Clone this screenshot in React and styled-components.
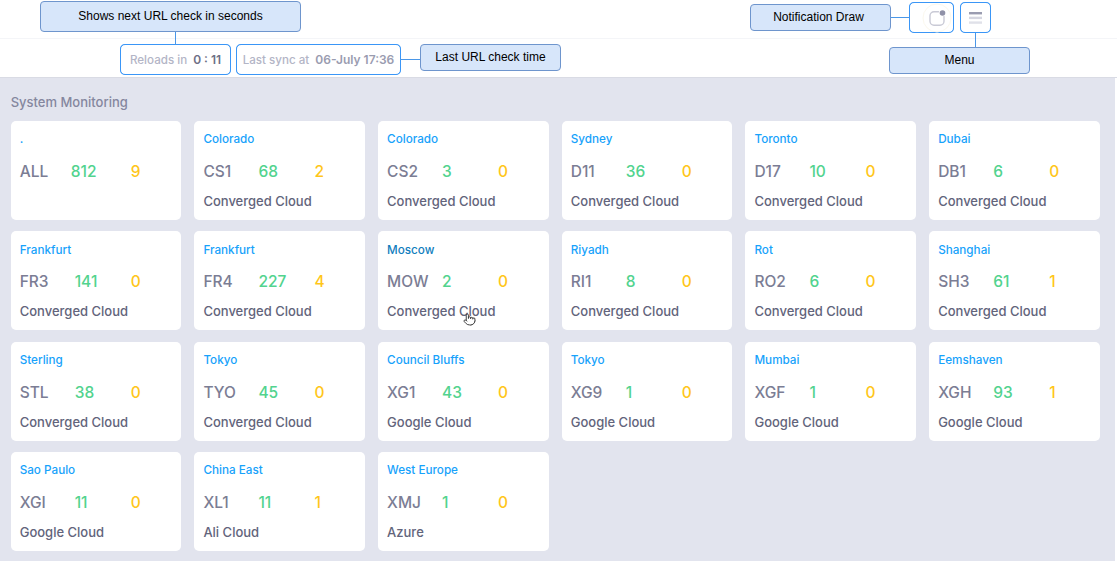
import React from "react"
import styled, { createGlobalStyle } from "styled-components"
import { Pointer } from "lucide-react"

const GlobalStyle = createGlobalStyle`
  html, body {
    margin: 0;
    padding: 0;
    background: #fff;
    font-family: Inter, "Liberation Sans", sans-serif;
  }
`

const Page = styled.div`
  position: relative;
  width: 1117px;
  height: 561px;
  overflow: hidden;
`

const Header = styled.header`
  height: 77px;
  border-bottom: 1px solid #d9dbe4;
`

const TopBar = styled.div`
  box-sizing: border-box;
  height: 39px;
  border-bottom: 1px solid #f4f5f8;
  display: flex;
  justify-content: flex-end;
  align-items: flex-start;
  gap: 6px;
  padding: 2px 126px 0 0;
`

const SubBar = styled.div`
  display: flex;
  gap: 5px;
  padding: 5px 0 0 120px;
`

const Outlined = styled.div`
  box-sizing: border-box;
  height: 31px;
  border: 1px solid #3a96f7;
  box-shadow: 0 0 0.6px #3a96f7;
  border-radius: 5px;
  display: flex;
  align-items: center;
  justify-content: center;
  background: #fff;
`

const IconBox = styled(Outlined)`
  width: ${p => p.$w}px;
  padding-left: ${p => p.$shift || 0}px;
`

const Badge = styled(Outlined)`
  width: ${p => p.$w}px;
  gap: 6px;
  font-size: 11.6px;
  font-weight: 500;
  color: #b3b5c6;
`

const BadgeValue = styled.span`
  font-size: 12px;
  font-weight: 600;
  color: ${p => p.$dark ? "#6e7086" : "#9a9cb0"};
`

const Callout = styled.div`
  position: absolute;
  box-sizing: border-box;
  left: ${p => p.$x}px;
  top: ${p => p.$y}px;
  width: ${p => p.$w}px;
  height: ${p => p.$h}px;
  padding: 0 ${p => p.$nudge || 0}px 2px 0;
  background: #d7e6fa;
  border: 1px solid #6e95cd;
  border-radius: 4px;
  display: flex;
  align-items: center;
  justify-content: center;
  font-family: "Liberation Sans", Arial, sans-serif;
  font-size: 12px;
  color: #000;
`

const Line = styled.div`
  position: absolute;
  left: ${p => p.$x}px;
  top: ${p => p.$y}px;
  width: ${p => p.$w}px;
  height: ${p => p.$h}px;
  background: #4a97e8;
`

const Main = styled.main`
  background: #e2e4ee;
  width: 1115px;
  height: 483px;
  box-sizing: border-box;
  padding: 16.5px 0 0 10.7px;
`

const Title = styled.h1`
  margin: 0 0 11.5px;
  font-size: 13px;
  line-height: 15px;
  font-weight: 500;
  color: #85879e;
`

const Grid = styled.div`
  display: grid;
  grid-template-columns: repeat(6, 170.5px);
  grid-auto-rows: 99px;
  column-gap: 13.2px;
  row-gap: 11.3px;
`

const Card = styled.div`
  position: relative;
  box-sizing: border-box;
  background: #fff;
  border-radius: 5px;
  padding: 11.3px 9px 0;
`

const Region = styled.div`
  height: 15px;
  font-size: 11.7px;
  line-height: 15px;
  font-weight: 500;
  color: ${p => p.$active ? "#0f7dbd" : "#17a2fb"};
`

const Stats = styled.div`
  display: flex;
  margin-top: 14.7px;
  font-size: 15.5px;
  line-height: 20px;
  font-weight: 500;
`

const Code = styled.span`
  width: ${p => p.$wide ? 51 : 55}px;
  color: #7b7d94;
`

const Okay = styled.span`
  width: ${p => p.$wide ? 60 : 56}px;
  color: #52d38e;
`

const Warn = styled.span`
  color: #ffc61a;
`

const Provider = styled.div`
  margin-top: 11px;
  font-size: 13px;
  line-height: 17px;
  font-weight: 500;
  color: #62647b;
`

const Cursor = styled.span`
  position: absolute;
  left: 85px;
  top: 82px;
  display: flex;
  color: #222;
`

const sites = [
  [".", "ALL", 812, 9, ""],
  ["Colorado", "CS1", 68, 2, "Converged Cloud"],
  ["Colorado", "CS2", 3, 0, "Converged Cloud"],
  ["Sydney", "D11", 36, 0, "Converged Cloud"],
  ["Toronto", "D17", 10, 0, "Converged Cloud"],
  ["Dubai", "DB1", 6, 0, "Converged Cloud"],
  ["Frankfurt", "FR3", 141, 0, "Converged Cloud"],
  ["Frankfurt", "FR4", 227, 4, "Converged Cloud"],
  ["Moscow", "MOW", 2, 0, "Converged Cloud"],
  ["Riyadh", "RI1", 8, 0, "Converged Cloud"],
  ["Rot", "RO2", 6, 0, "Converged Cloud"],
  ["Shanghai", "SH3", 61, 1, "Converged Cloud"],
  ["Sterling", "STL", 38, 0, "Converged Cloud"],
  ["Tokyo", "TYO", 45, 0, "Converged Cloud"],
  ["Council Bluffs", "XG1", 43, 0, "Google Cloud"],
  ["Tokyo", "XG9", 1, 0, "Google Cloud"],
  ["Mumbai", "XGF", 1, 0, "Google Cloud"],
  ["Eemshaven", "XGH", 93, 1, "Google Cloud"],
  ["Sao Paulo", "XGI", 11, 0, "Google Cloud"],
  ["China East", "XL1", 11, 1, "Ali Cloud"],
  ["West Europe", "XMJ", 1, 0, "Azure"],
]

const NotifyIcon = () => (
  <svg width="30" height="30" viewBox="0 0 30 30">
    <circle cx="15" cy="15" r="14" fill="none" stroke="#fbf8ee" strokeWidth="1" />
    <path d="M16.5 8.7h-4.5a4 4 0 0 0-4 4v5.5a4 4 0 0 0 4 4h6a4 4 0 0 0 4-4v-4.7" fill="none" stroke="#c9cad6" strokeWidth="1.4" strokeLinecap="round" />
    <circle cx="20.5" cy="10" r="2.8" fill="#8f91a8" />
  </svg>
)

const MenuIcon = () => (
  <svg width="13" height="12" viewBox="0 0 13 12">
    <rect y="0" width="13" height="2.4" fill="#9a9cb0" />
    <rect y="4.7" width="13" height="2.4" fill="#d5d6e0" />
    <rect y="9.4" width="13" height="2.4" fill="#e0e1e9" />
  </svg>
)

export default function App() {
  return (
    <Page>
      <GlobalStyle />
      <Header>
        <TopBar>
          <IconBox $w={45} $shift={10}><NotifyIcon /></IconBox>
          <IconBox $w={31}><MenuIcon /></IconBox>
        </TopBar>
        <SubBar>
          <Badge $w={111}>Reloads in <BadgeValue $dark>0 : 11</BadgeValue></Badge>
          <Badge $w={165}>Last sync at <BadgeValue>06-July 17:36</BadgeValue></Badge>
        </SubBar>
      </Header>
      <Main>
        <Title>System Monitoring</Title>
        <Grid>
          {sites.map(([region, code, okay, warn, provider]) => (
            <Card key={code}>
              <Region $active={code === "MOW"}>{region}</Region>
              <Stats>
                <Code $wide={code === "ALL"}>{code}</Code>
                <Okay $wide={code === "ALL"}>{okay}</Okay>
                <Warn>{warn}</Warn>
              </Stats>
              <Provider>{provider}</Provider>
              {code === "MOW" && (
                <Cursor><Pointer size={13} fill="#fff" strokeWidth={1.6} /></Cursor>
              )}
            </Card>
          ))}
        </Grid>
      </Main>

      {/* annotations drawn on top of the screenshot */}
      <Line $x={175} $y={32} $w={1} $h={13} />
      <Callout $x={40} $y={1} $w={261} $h={31}>Shows next URL check in seconds</Callout>
      <Line $x={400} $y={59} $w={21} $h={1} />
      <Callout $x={420} $y={44} $w={141} $h={27}>Last URL check time</Callout>
      <Line $x={891} $y={17} $w={19} $h={1} />
      <Callout $x={750} $y={4} $w={141} $h={27} $nudge={4}>Notification Draw</Callout>
      <Line $x={975} $y={33} $w={1} $h={14} />
      <Callout $x={889} $y={47} $w={141} $h={27}>Menu</Callout>
    </Page>
  )
}
